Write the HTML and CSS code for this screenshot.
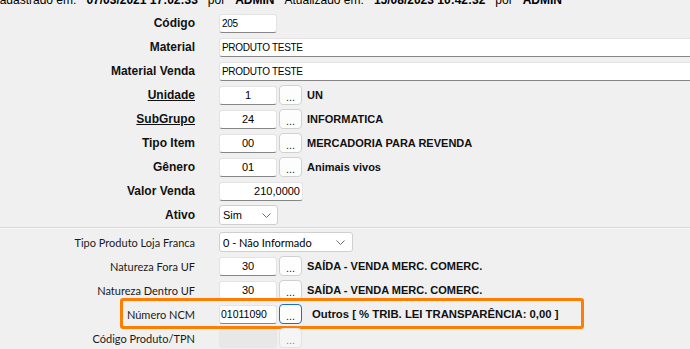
FILE: index.html
```html
<!DOCTYPE html>
<html lang="pt-BR">
<head>
    <meta charset="UTF-8">
    <title>Cadastro de Material</title>
    <link rel="stylesheet" href="styles.css">
</head>
<body>
    <div class="audit">
        <span>Cadastrado em:</span><b>07/03/2021 17:02:33</b>
        <span>por</span><b>ADMIN</b>
        <span>Atualizado em:</span><b>15/08/2023 10:42:32</b>
        <span>por</span><b>ADMIN</b>
    </div>

    <div class="form">
        <div class="row">
            <label>Código</label>
            <div class="field"><input class="input small" value="205"></div>
        </div>
        <div class="row">
            <label>Material</label>
            <div class="field"><input class="input wide" value="PRODUTO TESTE"></div>
        </div>
        <div class="row">
            <label>Material Venda</label>
            <div class="field"><input class="input wide" value="PRODUTO TESTE"></div>
        </div>
        <div class="row">
            <label class="link">Unidade</label>
            <div class="field">
                <input class="input small center" value="1">
                <button class="lookup">...</button>
                <span class="desc">UN</span>
            </div>
        </div>
        <div class="row">
            <label class="link">SubGrupo</label>
            <div class="field">
                <input class="input small center" value="24">
                <button class="lookup">...</button>
                <span class="desc">INFORMATICA</span>
            </div>
        </div>
        <div class="row">
            <label>Tipo Item</label>
            <div class="field">
                <input class="input small center" value="00">
                <button class="lookup">...</button>
                <span class="desc">MERCADORIA PARA REVENDA</span>
            </div>
        </div>
        <div class="row">
            <label>Gênero</label>
            <div class="field">
                <input class="input small center" value="01">
                <button class="lookup">...</button>
                <span class="desc">Animais vivos</span>
            </div>
        </div>
        <div class="row">
            <label>Valor Venda</label>
            <div class="field"><input class="input money" value="210,0000"></div>
        </div>
        <div class="row">
            <label>Ativo</label>
            <div class="field">
                <div class="select select-short">
                    <span>Sim</span>
                    <svg width="9" height="5" viewBox="0 0 9 5"><path d="M0.5 0.5 L4.5 4.5 L8.5 0.5" fill="none" stroke="#6b6b6b" stroke-width="1"/></svg>
                </div>
            </div>
        </div>
    </div>

    <div class="divider"></div>

    <div class="form fiscal">
        <div class="row">
            <label>Tipo Produto Loja Franca</label>
            <div class="field">
                <div class="select select-long">
                    <span>0 - Não Informado</span>
                    <svg width="9" height="5" viewBox="0 0 9 5"><path d="M0.5 0.5 L4.5 4.5 L8.5 0.5" fill="none" stroke="#6b6b6b" stroke-width="1"/></svg>
                </div>
            </div>
        </div>
        <div class="row">
            <label>Natureza Fora UF</label>
            <div class="field">
                <input class="input small center" value="30">
                <button class="lookup">...</button>
                <span class="desc">SAÍDA - VENDA MERC. COMERC.</span>
            </div>
        </div>
        <div class="row">
            <label>Natureza Dentro UF</label>
            <div class="field">
                <input class="input small center" value="30">
                <button class="lookup">...</button>
                <span class="desc">SAÍDA - VENDA MERC. COMERC.</span>
            </div>
        </div>
        <div class="row highlighted">
            <span class="highlight"></span>
            <label>Número NCM</label>
            <div class="field">
                <input class="input small ncm" value="01011090">
                <button class="lookup focused">...</button>
                <span class="desc ncm-desc">Outros [ % TRIB. LEI TRANSPARÊNCIA: 0,00 ]</span>
            </div>
        </div>
        <div class="row">
            <label>Código Produto/TPN</label>
            <div class="field">
                <input class="input small disabled" value="" disabled>
                <button class="lookup disabled">...</button>
            </div>
        </div>
    </div>
</body>
</html>
```

FILE: styles.css
```css
* {
    margin: 0;
    padding: 0;
    box-sizing: border-box;
}

body {
    background: #f0f0f0;
    font-family: 'Liberation Sans', Arial, sans-serif;
    color: #000;
    overflow: hidden;
    width: 690px;
    height: 349px;
}

/* audit line, partly scrolled off the top */
.audit {
    display: flex;
    gap: 10px;
    height: 12px;
    margin-top: -6px;
    margin-bottom: 5px;
    margin-left: -9px;
    font-size: 12px;
    line-height: 12px;
    white-space: nowrap;
}

.audit b {
    font-weight: bold;
}

.row {
    display: grid;
    grid-template-columns: 195px 1fr;
    column-gap: 24px;
    height: 24px;
    align-items: center;
    position: relative;
}

.row label {
    text-align: right;
    white-space: nowrap;
    font-weight: bold;
    font-size: 12px;
    color: #111;
}

.row label.link {
    text-decoration: underline;
}

.fiscal .row label {
    font-family: Lato, 'Liberation Sans', sans-serif;
    font-weight: normal;
    font-size: 11px;
    color: #1a1a1a;
}

.field {
    display: flex;
    align-items: center;
    white-space: nowrap;
}

.input {
    height: 19px;
    background: #fff;
    border: 1px solid #e3e3e3;
    border-bottom: 1px solid #868686;
    border-radius: 3px;
    font-family: 'Liberation Sans', Arial, sans-serif;
    font-size: 10px;
    letter-spacing: -0.3px;
    color: #000;
    padding: 0 2px;
    outline: none;
}

.small {
    width: 58px;
}

.wide {
    width: 520px;
}

.money {
    width: 84px;
    text-align: right;
    font-size: 11px;
    letter-spacing: 0;
}

.center {
    text-align: center;
    font-size: 11px;
    letter-spacing: 0;
}

.ncm {
    font-size: 10.5px;
    letter-spacing: 0;
    padding: 0 1px;
}

.input.disabled {
    background: #e8e8e8;
    border: 1px solid #e6e6e6;
}

.lookup {
    width: 23px;
    height: 20px;
    margin-left: 2px;
    background: #fdfdfd;
    border: 1px solid #d0d0d0;
    border-radius: 4px;
    font-family: 'Liberation Sans', Arial, sans-serif;
    font-size: 11px;
    line-height: 10px;
    color: #1b1b1b;
    display: flex;
    align-items: flex-end;
    justify-content: center;
    padding-bottom: 2px;
}

.lookup.focused {
    border: 1px solid #1a6fc9;
}

.lookup.disabled {
    background: #f5f5f5;
    border-color: #e2e2e2;
    color: #8a8a8a;
}

.desc {
    margin-left: 5px;
    font-weight: bold;
    font-size: 11px;
    color: #111;
}

.ncm-desc {
    margin-left: 10px;
    font-size: 11.3px;
}

.select {
    height: 20px;
    background: #fff;
    border: 1px solid #cfcfcf;
    border-radius: 3px;
    display: flex;
    align-items: center;
    justify-content: space-between;
    padding: 0 7px 0 3px;
    font-family: Lato, 'Liberation Sans', sans-serif;
    font-size: 11px;
    color: #000;
}

.select-short {
    width: 59px;
    font-family: 'Liberation Sans', Arial, sans-serif;
    font-size: 11px;
    padding-right: 6px;
}

.select-long {
    width: 134px;
}

.divider {
    height: 2px;
    border-top: 1px solid #dadada;
    border-bottom: 1px solid #f8f8f8;
    margin-bottom: 1px;
}

/* orange highlight drawn over the NCM row */
.highlight {
    position: absolute;
    left: 120px;
    top: -4px;
    width: 464px;
    height: 31px;
    border: 3px solid #ff7d00;
    border-radius: 3px;
    pointer-events: none;
}
```
